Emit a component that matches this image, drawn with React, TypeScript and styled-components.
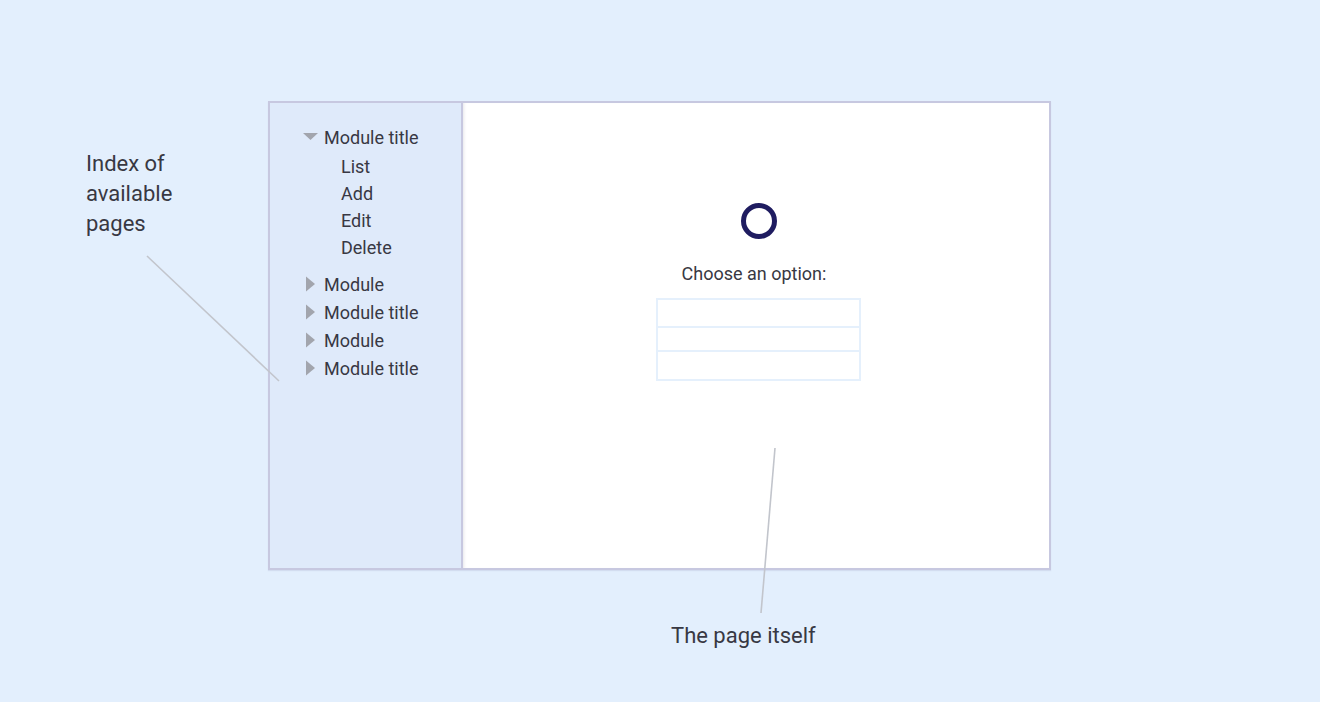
import React from "react";
import styled, { createGlobalStyle } from "styled-components";

const GlobalStyle = createGlobalStyle`
  html, body {
    margin: 0;
    padding: 0;
    background: #e3effd;
  }
  body {
    font-family: Roboto, "Liberation Sans", sans-serif;
    color: #383843;
  }
`;

const Canvas = styled.div`
  position: relative;
  width: 1320px;
  height: 702px;
  box-sizing: border-box;
  padding: 101px 0 0 268px;
  background: #e3effd;
  overflow: hidden;
`;

const Frame = styled.div`
  display: flex;
  width: 783px;
  height: 469px;
  box-sizing: border-box;
  border: 2px solid #c7c8e0;
  box-shadow: 0 1px 1px rgba(120, 120, 170, 0.15);
`;

const Sidebar = styled.nav`
  width: 193px;
  box-sizing: border-box;
  flex-shrink: 0;
  background: #dfeafa;
  border-right: 2px solid #c7c8e0;
  padding: 20px 0 0 32px;
`;

const Content = styled.main`
  flex: 1;
  background: #ffffff;
  box-shadow: inset 3px 0 3px -2px rgba(60, 60, 90, 0.12);
  display: flex;
  flex-direction: column;
  align-items: center;
  padding-top: 100px;
  padding-left: 5px;
`;

const ModuleRow = styled.div<{ $gap?: number }>`
  display: flex;
  align-items: center;
  gap: 4px;
  height: 28px;
  font-size: 18px;
  margin-top: ${(p) => p.$gap ?? 0}px;
  white-space: nowrap;
`;

const SubList = styled.ul`
  list-style: none;
  margin: 2px 0 0;
  padding: 0 0 0 39px;
`;

const SubItem = styled.li`
  height: 27px;
  line-height: 27px;
  font-size: 18px;
`;

const Ring = styled.div`
  width: 36px;
  height: 36px;
  box-sizing: border-box;
  border-radius: 50%;
  border: 5px solid #1f1c60;
`;

const Prompt = styled.div`
  margin-top: 25px;
  font-size: 18px;
  line-height: 20px;
  margin-right: 9px;
`;

const Options = styled.div`
  margin-top: 14px;
  width: 205px;
  box-sizing: border-box;
  border: 2px solid #e5f0fc;
  display: flex;
  flex-direction: column;
`;

const OptionRow = styled.div<{ $h: number }>`
  height: ${(p) => p.$h}px;
  & + & {
    border-top: 2px solid #e5f0fc;
  }
`;

const Note = styled.div<{ $x: number; $y: number }>`
  position: absolute;
  left: ${(p) => p.$x}px;
  top: ${(p) => p.$y}px;
  font-size: 22px;
  line-height: 30px;
  color: #383843;
`;

const Leaders = styled.svg`
  position: absolute;
  left: 0;
  top: 0;
  pointer-events: none;
`;

const Caret = ({ open }: { open: boolean }) => (
  <svg width="18" height="18" viewBox="0 0 18 18">
    {open ? (
      <polygon points="1,5 16,5 8.5,12" fill="#a2a5ad" />
    ) : (
      <polygon points="4,1.5 13,9 4,16.5" fill="#a2a5ad" />
    )}
  </svg>
);

export default function App() {
  return (
    <>
      <GlobalStyle />
      <Canvas>
        <Frame>
          <Sidebar>
            <ModuleRow>
              <Caret open />
              Module title
            </ModuleRow>
            <SubList>
              <SubItem>List</SubItem>
              <SubItem>Add</SubItem>
              <SubItem>Edit</SubItem>
              <SubItem>Delete</SubItem>
            </SubList>
            <ModuleRow $gap={9}>
              <Caret open={false} />
              Module
            </ModuleRow>
            <ModuleRow>
              <Caret open={false} />
              Module title
            </ModuleRow>
            <ModuleRow>
              <Caret open={false} />
              Module
            </ModuleRow>
            <ModuleRow>
              <Caret open={false} />
              Module title
            </ModuleRow>
          </Sidebar>
          <Content>
            <Ring />
            <Prompt>Choose an option:</Prompt>
            <Options>
              <OptionRow $h={26} />
              <OptionRow $h={22} />
              <OptionRow $h={27} />
            </Options>
          </Content>
        </Frame>
        <Note $x={86} $y={149}>
          Index of
          <br />
          available
          <br />
          pages
        </Note>
        <Note $x={671} $y={621}>The page itself</Note>
        <Leaders width="1320" height="702" viewBox="0 0 1320 702">
          <line x1="147" y1="256" x2="279" y2="381" stroke="#c2c5cc" strokeWidth="1.6" />
          <line x1="775" y1="448" x2="761" y2="613" stroke="#c2c5cc" strokeWidth="1.6" />
        </Leaders>
      </Canvas>
    </>
  );
}
